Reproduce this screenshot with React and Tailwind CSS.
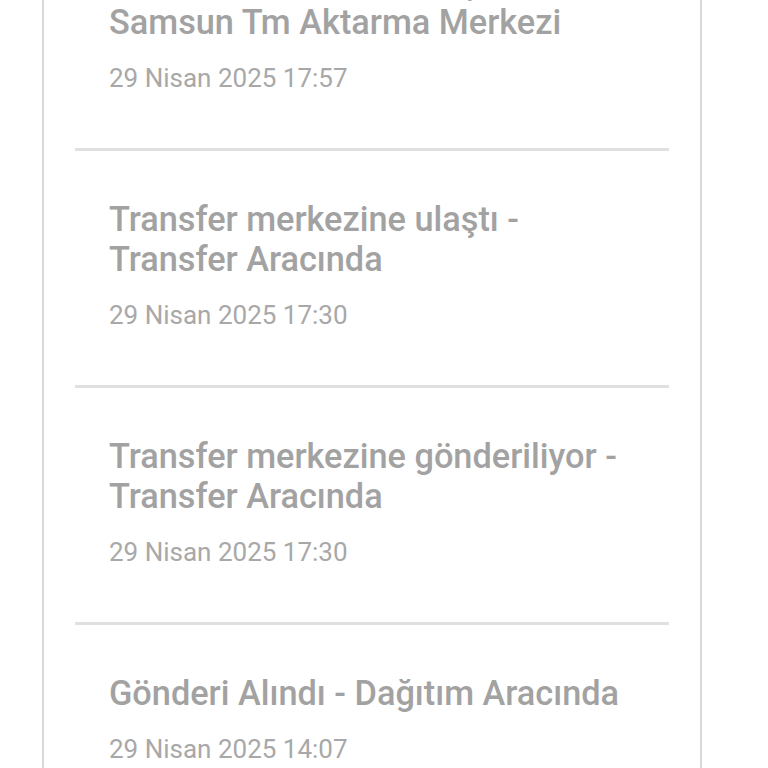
import React from "react";

const items = [
  { title: ["Transfer merkezine ulaştı -", "Samsun Tm Aktarma Merkezi"], date: "29 Nisan 2025 17:57" },
  { title: ["Transfer merkezine ulaştı -", "Transfer Aracında"], date: "29 Nisan 2025 17:30" },
  { title: ["Transfer merkezine gönderiliyor -", "Transfer Aracında"], date: "29 Nisan 2025 17:30" },
  { title: ["Gönderi Alındı - Dağıtım Aracında"], date: "29 Nisan 2025 14:07" },
];

export default function App() {
  return (
    <div
      className="w-[768px] h-[768px] overflow-hidden bg-white"
      style={{ fontFamily: "Roboto, 'Noto Sans', sans-serif" }}
    >
      <div className="ml-[42px] w-[660px] min-h-[900px] border-x-2 border-[#d9d9d9] px-[31px] mt-[-86px]">
        {items.map((it, i) => (
          <div key={i}>
            {i > 0 && <div className="h-[3px] bg-[#e0e0e0]" />}
            <div className="px-[34px] pt-[48px] pb-[54px]">
              <div className="text-[34.3px] leading-[40px] font-medium text-[#a2a2a2]">
                {it.title.map((t, j) => (
                  <div key={j} className="whitespace-nowrap">{t}</div>
                ))}
              </div>
              <div className="mt-[20px] text-[26px] leading-[32px] text-[#a8a8a8]">{it.date}</div>
            </div>
          </div>
        ))}
      </div>
    </div>
  );
}
